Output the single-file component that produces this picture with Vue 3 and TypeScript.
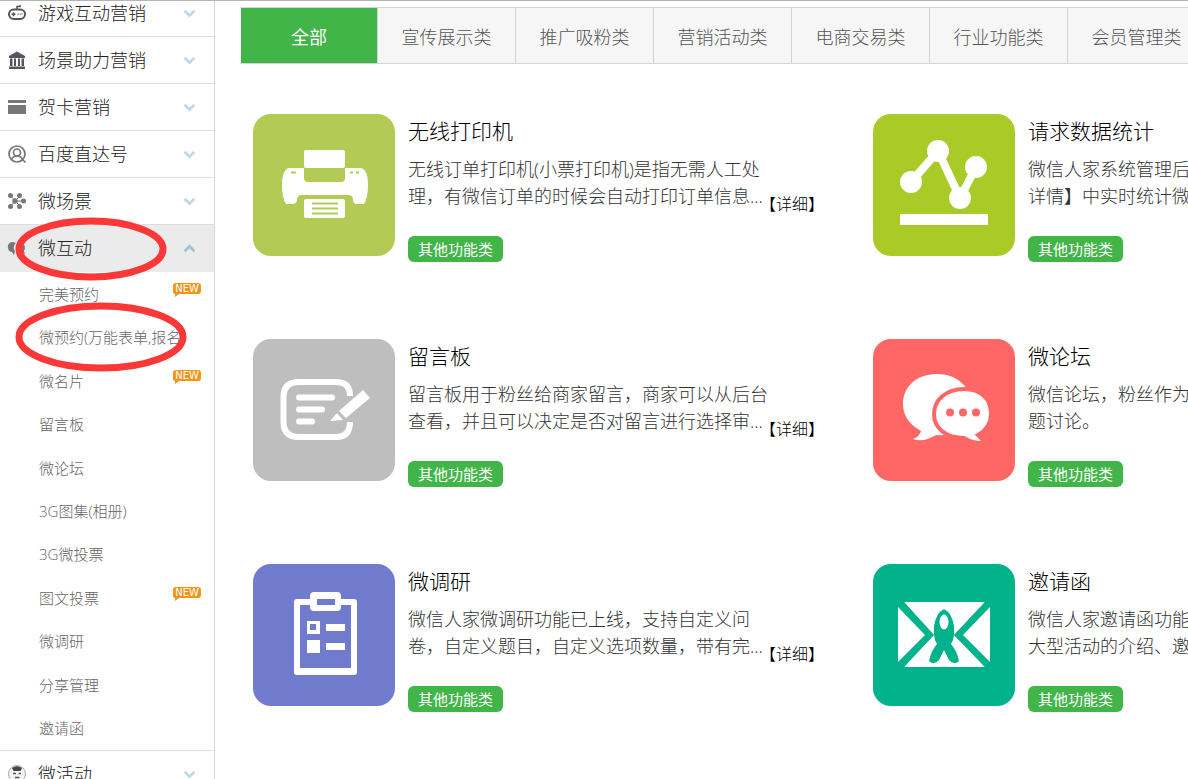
<script setup lang="ts">
interface MenuItem { label: string; icon: string; open?: boolean }
interface SubItem { label: string; isNew?: boolean }
interface Feature { title: string; lines: string[]; icon: string; color: string }

const menuTop: MenuItem[] = [
  { label: '游戏互动营销', icon: 'game' },
  { label: '场景助力营销', icon: 'bank' },
  { label: '贺卡营销', icon: 'card' },
  { label: '百度直达号', icon: 'user' },
  { label: '微场景', icon: 'nodes' },
  { label: '微互动', icon: 'chat', open: true },
]
const subItems: SubItem[] = [
  { label: '完美预约', isNew: true },
  { label: '微预约(万能表单,报名)' },
  { label: '微名片', isNew: true },
  { label: '留言板' },
  { label: '微论坛' },
  { label: '3G图集(相册)' },
  { label: '3G微投票' },
  { label: '图文投票', isNew: true },
  { label: '微调研' },
  { label: '分享管理' },
  { label: '邀请函' },
]
const menuBottom: MenuItem[] = [{ label: '微活动', icon: 'face' }]
const groups = [
  { items: menuTop, subs: subItems },
  { items: menuBottom, subs: [] as SubItem[] },
]
const tabs = ['全部', '宣传展示类', '推广吸粉类', '营销活动类', '电商交易类', '行业功能类', '会员管理类']
const features: Feature[] = [
  { title: '无线打印机', icon: 'printer', color: '#b3cb55', lines: ['无线订单打印机(小票打印机)是指无需人工处', '理，有微信订单的时候会自动打印订单信息...'] },
  { title: '请求数据统计', icon: 'stats', color: '#aacb27', lines: ['微信人家系统管理后台', '详情】中实时统计微信'] },
  { title: '留言板', icon: 'note', color: '#bebebe', lines: ['留言板用于粉丝给商家留言，商家可以从后台', '查看，并且可以决定是否对留言进行选择审...'] },
  { title: '微论坛', icon: 'forum', color: '#ff6766', lines: ['微信论坛，粉丝作为话', '题讨论。'] },
  { title: '微调研', icon: 'survey', color: '#717bce', lines: ['微信人家微调研功能已上线，支持自定义问', '卷，自定义题目，自定义选项数量，带有完...'] },
  { title: '邀请函', icon: 'letter', color: '#02b28a', lines: ['微信人家邀请函功能支', '大型活动的介绍、邀请'] },
]
</script>

<template>
  <div class="page">
    <aside class="sidebar">
      <nav>
        <template v-for="(group, g) in groups" :key="g">
          <button v-for="item in group.items" :key="item.label" type="button" class="menu" :class="{ open: item.open }">
            <svg class="menu-icon" viewBox="0 0 20 20" aria-hidden="true">
              <g v-if="item.icon === 'game'" fill="none" stroke="#55555f">
                <rect x="2" y="6.500" width="16" height="9.500" rx="4.700" stroke-width="2" />
                <path d="M10 6V3.500H13V2" stroke-width="1.500" />
                <path d="M4.500 11.200H8.500M6.500 9.200V13.200" stroke-width="1.600" />
                <path d="M10.500 11.200H11.700M12.700 11.200H13.700M14.500 11.200H15.500" stroke-width="1.200" />
              </g>
              <g v-else-if="item.icon === 'bank'" fill="#55555f">
                <path d="M10 1.500L18 6V8H2V6ZM2 16.500H18V19H2ZM3 8.500H5.500V16H3ZM7 8.500H9V16H7ZM11 8.500H13V16H11ZM14.500 8.500H17V16H14.500Z" />
              </g>
              <g v-else-if="item.icon === 'card'" fill="#77777a">
                <path d="M1 3H19V6H1ZM1 8H19V17H1Z" />
              </g>
              <g v-else-if="item.icon === 'user'" fill="none" stroke="#77777a" stroke-width="1.700">
                <circle cx="10" cy="10" r="8" />
                <circle cx="10" cy="8.500" r="3.500" />
                <path d="M4.500 15.500C5.500 13 8 12 10 12S14.500 13 15.500 15.500L18.500 18.500" />
              </g>
              <g v-else-if="item.icon === 'nodes'" fill="#77777a">
                <path d="M4 5L8 10L4 15M13 5L8 10L13 15M8 10H17" fill="none" stroke="#77777a" stroke-width="1" />
                <circle cx="3.500" cy="4.500" r="2.500" /><circle cx="12.500" cy="4.500" r="2.500" />
                <circle cx="8" cy="10" r="2.700" /><circle cx="16.500" cy="10" r="2.500" />
                <circle cx="3.500" cy="15.500" r="2.500" /><circle cx="12.500" cy="15.500" r="2.500" />
              </g>
              <g v-else-if="item.icon === 'chat'" fill="#77777a">
                <path d="M6 4C2 4 0.500 7 1 10C1.500 13 3.500 14 5 14L7 17L8 13C6 11 6.500 7 9 5Z" />
                <path d="M13 6C9 7 8 11 10 13.500C11.500 15.500 14 15 15 14.500L18 16L17 13C19.500 9 17 5 13 6Z" />
              </g>
              <g v-else>
                <circle cx="10" cy="10" r="8.500" fill="#f4f4f4" stroke="#aaa" />
                <path d="M5 4Q10 0.500 15 4L13.500 7H6.500Z" fill="#444" />
                <path d="M6 9.500H9M11.500 9.500H14M8 13.500H12.500M6 18V16H14V18Z" stroke="#555" stroke-width="1.400" fill="#555" />
              </g>
            </svg>
            <span class="menu-label">{{ item.label }}</span>
            <svg class="chevron" viewBox="0 0 12 8" aria-hidden="true">
              <path :d="item.open ? 'M1.500 6.500L6 2L10.500 6.500' : 'M1.500 1.500L6 6L10.500 1.500'" />
            </svg>
          </button>
          <ul v-if="group.subs.length" class="subs">
            <li v-for="sub in group.subs" :key="sub.label">
              <a href="#" class="sub">{{ sub.label }}</a>
              <svg v-if="sub.isNew" class="new" viewBox="0 0 28 14" role="img" aria-label="NEW">
                <path d="M3 0H25Q28 0 28 3V8Q28 11 25 11H6L2 14V11Q0 11 0 8V3Q0 0 3 0Z" fill="#f0941a" />
                <text x="14" y="9" text-anchor="middle">NEW</text>
              </svg>
            </li>
          </ul>
        </template>
      </nav>
      <svg class="marks" viewBox="0 0 200 170" aria-hidden="true">
        <ellipse cx="91" cy="40" rx="72" ry="28" />
        <ellipse cx="101" cy="128" rx="82" ry="31" />
      </svg>
    </aside>

    <main class="main">
      <div class="tabs" role="tablist">
        <button v-for="(tab, i) in tabs" :key="tab" type="button" role="tab" class="tab" :class="{ active: i === 0 }" :aria-selected="i === 0">{{ tab }}</button>
      </div>
      <section class="grid">
        <article v-for="f in features" :key="f.title" class="card">
          <svg class="tile" viewBox="0 0 142 142" aria-hidden="true">
            <rect width="142" height="142" rx="18" :fill="f.color" />
            <g v-if="f.icon === 'printer'" fill="#fff">
              <path d="M35 54H51V64Q51 68 55 68H88Q92 68 92 64V54H108Q115 56 115 71Q115 84 111 90H104Q100 90 100 86Q100 81 95 81H49Q44 81 44 86Q44 90 39 90H33Q29 84 29 71Q29 57 35 54Z" />
              <rect x="51" y="36" width="41" height="18" rx="2" />
              <rect x="51" y="85" width="41" height="19" rx="2" />
              <path d="M59 89.500H85M59 94.500H85M59 99.500H85M38 58.500H43M97 58.500H100M103 58.500H106" fill="none" :stroke="f.color" stroke-width="2" />
            </g>
            <g v-else-if="f.icon === 'stats'" fill="#fff">
              <path d="M38 68L65 37L87 84L103 53" fill="none" stroke="#fff" stroke-width="8" />
              <circle cx="38" cy="68" r="11" /><circle cx="65" cy="37" r="11" />
              <circle cx="87" cy="84" r="11" /><circle cx="103" cy="53" r="11" />
              <rect x="27" y="100" width="88" height="11" />
            </g>
            <g v-else-if="f.icon === 'note'" fill="none" stroke="#fff">
              <path d="M97 57Q97 43 83 43H46Q30.500 43 30.500 58V83Q30.500 98 46 98H83Q97 98 97 83" stroke-width="6" />
              <path d="M46 58.500H79M46 70.500H69M46 82.500H59" stroke-width="6" stroke-linecap="round" />
              <path d="M86 72L110 51L117 59L93 79Z M84 74L90 81L77 82Z" fill="#fff" stroke="none" />
            </g>
            <g v-else-if="f.icon === 'forum'">
              <path d="M64 35C42 35 30 49 30 65C30 77 37 86 48 92Q47 97 40 100Q50 104 63 96C84 98 98 84 98 65C98 48 84 35 64 35Z" fill="#fff" />
              <path d="M91 50C73 50 61 61 61 75C61 90 74 99 91 99Q102 106 112 103L105 96C113 92 118 84 118 75C118 60 108 50 91 50Z" fill="#fff" :stroke="f.color" stroke-width="4" />
              <g :fill="f.color"><circle cx="77" cy="73.500" r="4" /><circle cx="90" cy="73.500" r="4" /><circle cx="103" cy="73.500" r="4" /></g>
            </g>
            <g v-else-if="f.icon === 'survey'" fill="#fff">
              <path fill-rule="evenodd" d="M44 35H57V32Q57 28 61 28H84Q88 28 88 32V35H101Q104 35 104 38V108Q104 111 101 111H44Q41 111 41 108V38Q41 35 44 35ZM47 41V104H98V41H88V43Q88 47 84 47H61Q57 47 57 43V41ZM64 35V41H82V35Z" />
              <path fill-rule="evenodd" d="M54 57H67V70H54ZM57 60V66H63V60ZM54 76H67V89H54ZM73 60H92V67H73ZM73 79H92V86H73Z" />
            </g>
            <g v-else>
              <path d="M31 38H112L83 70L112 103H31L58 70Z" fill="#fff" />
              <path d="M25 43L52 71L25 98ZM117 43L90 71L117 98Z" fill="#fff" />
              <path d="M27 38L57 71L27 103M116 38L85 71L116 103" fill="none" :stroke="f.color" stroke-width="6" />
              <path d="M71 45Q79 49 81 62Q82 74 78 80Q84 87 86 97Q81 102 76 96L71 86L66 96Q61 102 56 97Q58 87 64 80Q60 74 61 62Q63 49 71 45Z" :fill="f.color" />
              <ellipse cx="71" cy="58" rx="4.500" ry="7.500" fill="#fff" />
            </g>
          </svg>
          <div class="body">
            <h2>{{ f.title }}</h2>
            <div class="info">
              <p><span v-for="line in f.lines" :key="line">{{ line }}</span></p>
              <a href="#" class="detail">【详细】</a>
            </div>
            <span class="tag">其他功能类</span>
          </div>
        </article>
      </section>
    </main>
  </div>
</template>

<style>
body { margin: 0; overflow: hidden; }
</style>

<style scoped>
* { box-sizing: border-box; }
.page {
  display: flex;
  height: 100vh;
  overflow: hidden;
  border-top: 1px solid #b4b4b4;
  background: #fff;
  font-family: "Open Sans", "Noto Sans CJK SC", sans-serif;
  font-weight: 300;
}
button { font: inherit; cursor: pointer; }
a { text-decoration: none; }
.sidebar {
  position: relative;
  flex: 0 0 215px;
  border-right: 1px solid #d8d8d8;
  overflow: hidden;
}
nav { margin-top: -11px; }
.menu {
  display: flex;
  align-items: center;
  width: 100%;
  height: 47px;
  padding: 0 18px 0 7px;
  border: 0;
  border-bottom: 1px solid #dedede;
  background: #fff;
  color: #222;
  font-size: 18px;
  line-height: 24px;
}
.menu.open { background: #ebebeb; border-color: #ebebeb; }
.menu-icon { width: 20px; height: 20px; margin-right: 11px; }
.menu-label { flex: 1; text-align: left; }
.chevron { width: 13px; height: 9px; fill: none; stroke: #bdd9e6; stroke-width: 2.5; }
.open .chevron { stroke: #98c4d8; }
.subs {
  display: grid;
  grid-auto-rows: 1fr;
  height: 479px;
  margin: 0;
  padding: 0;
  list-style: none;
  border-bottom: 1px solid #dedede;
}
.subs li {
  display: flex;
  align-items: center;
  justify-content: space-between;
  padding: 0 13px 0 39px;
}
.sub {
  max-width: 143px;
  overflow: hidden;
  white-space: nowrap;
  color: #666;
  font-size: 15px;
  line-height: 22px;
}
.new { width: 28px; height: 14px; margin-bottom: 8px; }
.new text { fill: #fff; font-family: "DejaVu Sans", sans-serif; font-size: 10px; font-weight: 400; }
.marks {
  position: absolute;
  top: 208px;
  left: 0;
  width: 200px;
  height: 170px;
  fill: none;
  stroke: #fa3838;
  stroke-width: 7;
  pointer-events: none;
}
.main { flex: 1; min-width: 0; padding: 6px 0 0 26px; overflow: hidden; }
.tabs { display: flex; height: 57px; margin-left: -1px; border: 1px solid #d5d5d5; border-right: 0; border-left-color: #fff; }
.tab {
  flex: 0 0 138px;
  padding: 0;
  border: 0;
  border-right: 1px solid #d5d5d5;
  background: #f6f6f6;
  color: #555;
  font-size: 18px;
}
.tab:first-child { flex-basis: 137px; }
.tab.active { background: #42b549; color: #fff; font-weight: 400; }
.grid {
  display: grid;
  grid-template-columns: repeat(2, 620px);
  grid-auto-rows: 225px;
  padding: 50px 0 0 12px;
}
.card { display: flex; align-items: flex-start; gap: 13px; }
.tile { flex: none; width: 142px; height: 142px; }
h2 { margin: 0 0 8px; color: #000; font-size: 21px; font-weight: 300; line-height: 34px; }
.info { display: flex; align-items: flex-end; height: 58px; margin-bottom: 22px; }
p { flex: 0 0 352px; min-width: 0; align-self: flex-start; margin: 0; color: #333; font-size: 18px; line-height: 27px; white-space: nowrap; }
p span { display: block; }
.detail { color: #000; font-size: 16px; line-height: 20px; white-space: nowrap; }
.tag {
  display: inline-block;
  padding: 0 10px;
  border-radius: 6px;
  background: #42b549;
  color: #fff;
  font-size: 15px;
  font-weight: 400;
  line-height: 26px;
}
</style>
